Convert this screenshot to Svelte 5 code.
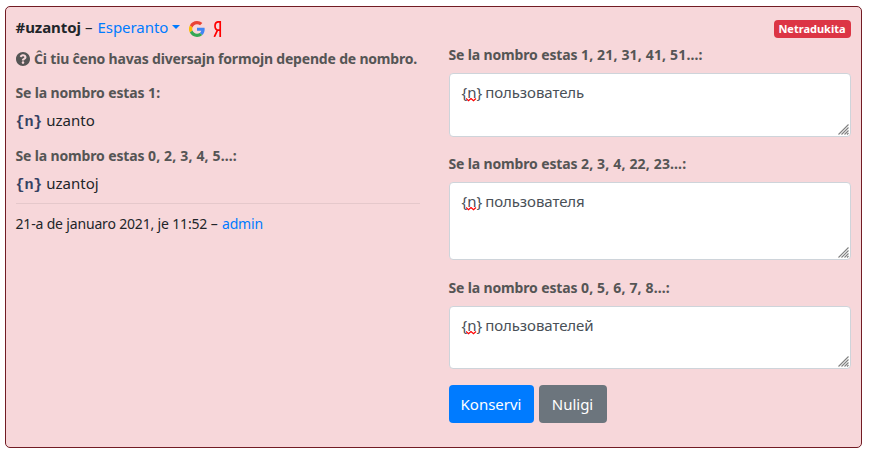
<script>
  const prefix = 'Se la nombro estas';
  const sources = [
    { numbers: '1:', text: 'uzanto' },
    { numbers: '0, 2, 3, 4, 5…:', text: 'uzantoj' }
  ];
  const forms = [
    { numbers: '1, 21, 31, 41, 51…:', text: 'пользователь', height: 64, gap: 17 },
    { numbers: '2, 3, 4, 22, 23…:', text: 'пользователя', height: 78, gap: 18 },
    { numbers: '0, 5, 6, 7, 8…:', text: 'пользователей', height: 63, gap: 16 }
  ];
</script>

{#snippet label(numbers)}
  <div class="label"><span class="prefix">{prefix}</span> <span class="numbers">{numbers}</span></div>
{/snippet}

<main class="card">
  <section class="source">
    <div class="head">
      <strong>#uzantoj</strong><span class="dash">–</span><a class="lang" href="#lang">Esperanto</a><span class="caret"></span>
      <svg class="google" width="16" height="16" viewBox="0 0 48 48">
        <path fill="#ea4335" d="M24 9.500c3.500 0 6.700 1.200 9.200 3.600l6.900-6.900C35.900 2.400 30.500 0 24 0 14.600 0 6.500 5.400 2.600 13.200l8 6.200C12.400 13.700 17.700 9.500 24 9.500z" />
        <path fill="#4285f4" d="M47 24.600c0-1.600-.2-3.100-.4-4.600H24v9h12.900c-.6 3-2.300 5.500-4.800 7.200l7.700 6C44.400 38 47 31.800 47 24.600z" />
        <path fill="#fbbc05" d="M10.500 28.600A14.500 14.500 0 0 1 10.500 19.400l-8-6.200a24 24 0 0 0 0 21.600z" />
        <path fill="#34a853" d="M24 48c6.500 0 11.900-2.100 15.900-5.800l-7.700-6c-2.200 1.500-4.900 2.300-8.200 2.300-6.300 0-11.600-4.200-13.500-9.900l-8 6.200C6.500 42.600 14.600 48 24 48z" />
      </svg>
      <svg class="yandex" width="9" height="16" viewBox="0 0 9 16">
        <path d="M7.200 15.900V.8H5.700C3.400.8 2 2.400 2 5s1.300 4.200 3.700 4.200h1.500M4.500 9.200 1.300 15.900" fill="none" stroke="#f00" stroke-width="1.700" />
      </svg>
    </div>
    <div class="hint">
      <svg width="14" height="14" viewBox="8 8 496 496">
        <path fill="currentColor" d="M504 256c0 137-111 248-248 248S8 393 8 256C8 119.100 119 8 256 8s248 111.100 248 248zM262.700 90c-54.500 0-89.300 23-116.500 63.800-3.500 5.300-2.400 12.400 2.700 16.300l34.700 26.300c5.200 3.900 12.600 3 16.700-2.100 17.900-22.700 30.100-35.800 57.300-35.800 20.400 0 45.700 13.100 45.700 33 0 15-12.400 22.700-32.500 34C247.100 238.500 216 255 216 296v4c0 6.600 5.400 12 12 12h56c6.600 0 12-5.400 12-12v-1.300c0-28.700 83.800-29.900 83.800-107.500C379.800 132.700 319.200 90 262.700 90zM256 338c-25.400 0-46 20.600-46 46s20.600 46 46 46 46-20.600 46-46-20.600-46-46-46z" />
      </svg>
      <span>Ĉi tiu ĉeno havas diversajn formojn depende de nombro.</span>
    </div>
    {#each sources as s}
      <div class="entry">
        {@render label(s.numbers)}
        <div class="value"><code>{'{n}'}</code><span>{s.text}</span></div>
      </div>
    {/each}
    <div class="meta"><span>21-a de januaro 2021, je 11:52 –</span><a href="#admin">admin</a></div>
  </section>

  <section class="forms">
    <div class="status"><span class="badge">Netradukita</span></div>
    {#each forms as f}
      {@render label(f.numbers)}
      <div class="box" style="height: {f.height}px; margin-bottom: {f.gap}px">
        <span class="var">{'{n}'}<svg class="wave" width="11" height="4" viewBox="0 0 11 4"><path d="M0 .5 2.500 2.800 5 .5 7.500 2.800 10 .5" fill="none" stroke="#f00" stroke-width="1.200" /></svg></span>
        <span class="word">{f.text}</span>
        <svg class="grip" width="11" height="11" viewBox="0 0 11 11"><path d="M.5 10.500l10-10M3.500 10.500l7-7M6.500 10.500l4-4M9 10.500l1.500-1.500" stroke="#808080" stroke-width="1.100" /></svg>
      </div>
    {/each}
    <div class="buttons"><button class="save">Konservi</button><button class="cancel">Nuligi</button></div>
  </section>
</main>

<style>
  :global(body) { background: #fff; }
  .card {
    box-sizing: border-box; width: 857px; height: 442px; margin: 6px 0 0 5px;
    border: 1px solid #721c24; border-radius: 5px; background: #f7d7da;
    display: flex; gap: 28px; padding: 0 10px 0 9.500px;
    font: 15px/24px "Noto Sans", sans-serif; color: #212529; white-space: nowrap;
  }
  a { color: #007bff; text-decoration: none; }
  svg { flex-shrink: 0; }
  .source { width: 404px; margin-right: 1px; padding-top: 8px; }
  .head { display: flex; align-items: center; height: 24px; }
  .head strong { letter-spacing: -0.06px; }
  .dash { margin: 0 5px 0 4px; }
  .lang { letter-spacing: -0.05px; }
  .caret { border: 4px solid transparent; border-top-color: #007bff; border-bottom: 0; margin: 0 0 0 4px; }
  .google { margin: 4px 0 0 9px; }
  .yandex { margin: 4px 0 0 7.800px; }
  .hint, .label { color: #555; font-size: 14px; font-weight: 700; line-height: 20px; }
  .hint { display: flex; align-items: center; gap: 4.500px; margin-top: 10px; height: 20px; letter-spacing: -0.19px; }
  .entry { margin-top: 14px; }
  .prefix { letter-spacing: -0.15px; }
  .numbers { letter-spacing: 0.17px; }
  .value { margin-top: 6px; height: 23px; line-height: 23px; display: flex; gap: 4px; }
  code { font: 700 15px/27px "Liberation Mono", monospace; color: #364263; letter-spacing: -0.1px; }
  .meta { border-top: 1px solid #e5c8cb; margin-top: 8px; padding-top: 8px; font-size: 14px; display: flex; gap: 4.500px; letter-spacing: -0.17px; }
  .forms { width: 402px; }
  .status { display: flex; justify-content: flex-end; height: 38px; padding-top: 13px; box-sizing: border-box; }
  .badge { width: 77px; height: 18px; border-radius: 4px; background: #dc3545; color: #fff; font-size: 11px; line-height: 18px; font-weight: 700; text-align: center; }
  .label { height: 20px; }
  .box { position: relative; box-sizing: border-box; margin-top: 8px; border: 1px solid #ced4da; border-radius: 4px; background: #fff; color: #495057; padding: 6px 12px; display: flex; gap: 3px; }
  .var { position: relative; }
  .word { letter-spacing: -0.08px; }
  .wave { position: absolute; left: 4px; top: 18px; }
  .grip { position: absolute; right: 1px; bottom: 1px; }
  .buttons { display: flex; gap: 5px; }
  button { height: 38px; border: 0; border-radius: 4px; padding: 0; color: #fff; font: 15px/38px "Noto Sans", sans-serif; }
  .save { width: 85px; background: #007bff; }
  .cancel { width: 68px; background: #6c757d; }
</style>
